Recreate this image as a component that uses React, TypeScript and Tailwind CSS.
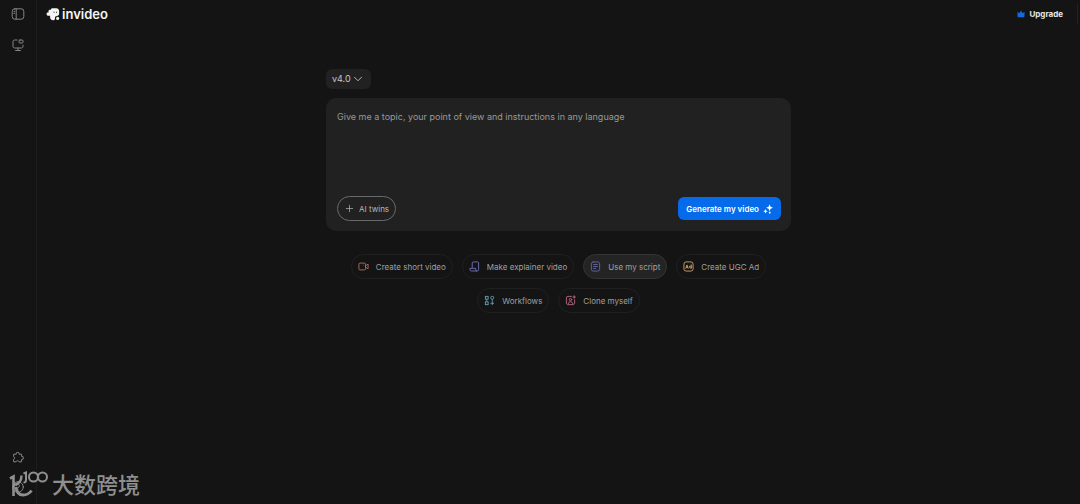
import React, { useState } from 'react';
import { Plus, ChevronDown } from 'lucide-react';

type IconProps = { className?: string };

const PanelIcon = ({ className }: IconProps) => (
  <svg viewBox="0 0 14 14" fill="none" stroke="currentColor" strokeLinecap="round" className={className}>
    <rect x="1.2" y="1.8" width="11.6" height="10.4" rx="2.6" />
    <path d="M5.2 1.8v10.4M3 4.6h.6M3 6.4h.6" />
  </svg>
);

const ScreenIcon = ({ className }: IconProps) => (
  <svg viewBox="0 0 14 14" fill="none" stroke="currentColor" strokeLinecap="round" strokeLinejoin="round" className={className}>
    <path d="M6.2 2H3.6A1.6 1.6 0 0 0 2 3.6v4.8A1.6 1.6 0 0 0 3.6 10h6.8A1.6 1.6 0 0 0 12 8.4V7.2" />
    <rect x="8" y="2" width="4" height="3" rx="1" />
    <path d="M7 10v2.4M4.6 12.5h4.8" />
  </svg>
);

const PuzzleIcon = ({ className }: IconProps) => (
  <svg viewBox="0 0 14 14" fill="none" stroke="currentColor" strokeLinejoin="round" className={className}>
    <path d="M2.6 4.2h2.6a1.5 1.5 0 1 1 2.9 0h2.5v2.3a1.5 1.5 0 1 1 0 2.9v2.4H8a1.5 1.5 0 0 0-2.9 0H2.6V9.3a1.5 1.5 0 0 0 0-2.8z" />
  </svg>
);

const HelpIcon = ({ className }: IconProps) => (
  <svg viewBox="0 0 14 14" fill="none" stroke="currentColor" strokeLinecap="round" className={className}>
    <circle cx="7" cy="7" r="5.3" />
    <path d="M5.7 5.7a1.4 1.4 0 1 1 1.9 1.3c-.4.2-.6.4-.6.9M7 9.9v.1" />
  </svg>
);

const LogoMark = ({ className }: IconProps) => (
  <svg viewBox="0 0 24 24" fill="currentColor" className={className}>
    <path d="M11 2h6.5c3 0 5 2 5 5v4.5c0 1.8-1 3-2.6 3.6l-4.4 1.6v2.8c0 2-1.5 3-3.5 3-3.2 0-5-2-5-5v-2.3H4.8C2.6 15.2 1 13.8 1 11.8c0-1.5 1-2.4 2.5-2.4h.8V7.3c0-1.5 1-2.5 2.5-2.5h1.5C8.6 3 9.4 2 11 2z" />
    <path d="M13 8h1.6v2H13zM17.4 8H19v2h-1.6z" className="fill-[#141414]" />
    <circle cx="20" cy="19.5" r="2.6" />
  </svg>
);

const CrownIcon = ({ className }: IconProps) => (
  <svg viewBox="0 0 16 16" fill="currentColor" className={className}>
    <path d="M1 3.5 4.8 6.5 8 1.2l3.2 5.3L15 3.5v9a2 2 0 0 1-2 2H3a2 2 0 0 1-2-2z" />
  </svg>
);

const SparkleIcon = ({ className }: IconProps) => (
  <svg viewBox="0 0 16 16" fill="currentColor" className={className}>
    <path d="M10.5.5l1.6 3.9L16 6l-3.9 1.6-1.6 3.9-1.6-3.9L5 6l3.9-1.6zM4 8l1.1 2.4L7.5 11.500l-2.400 1.100L4 15l-1.100-2.400L.5 11.500l2.400-1.100zM9.500 12.500h2.500V15H9.500z" />
  </svg>
);

const CameraIcon = ({ className }: IconProps) => (
  <svg viewBox="0 0 12 12" fill="none" stroke="currentColor" strokeLinejoin="round" className={className}>
    <rect x="1" y="2.3" width="7.2" height="7.4" rx="1.2" />
    <path d="M8.2 5.2 11 3.5v5L8.2 6.8M5.6 4.5h.6" />
  </svg>
);

const ExplainerIcon = ({ className }: IconProps) => (
  <svg viewBox="0 0 12 12" fill="none" stroke="currentColor" strokeLinejoin="round" className={className}>
    <path d="M3.5 7.5V2.2c0-.7.5-1.2 1.2-1.2h4.6c.7 0 1.2.5 1.2 1.2v7.3c0 .8-.6 1.4-1.4 1.4H2.6c-.9 0-1.6-.7-1.6-1.6V8h6.3v1.5c0 .8.7 1.4 1.5 1.4" />
  </svg>
);

const ScriptIcon = ({ className }: IconProps) => (
  <svg viewBox="0 0 12 12" fill="none" stroke="currentColor" strokeLinecap="round" className={className}>
    <rect x="1.5" y="1" width="9" height="10" rx="2" />
    <path d="M4 3.8h4M4 6h4M4 8.2h2" />
  </svg>
);

const AdIcon = ({ className }: IconProps) => (
  <svg viewBox="0 0 12 12" fill="none" stroke="currentColor" strokeLinejoin="round" className={className}>
    <rect x="1" y="1" width="10" height="10" rx="2.4" />
    <path d="M2.9 8.3 4.3 4.3 5.7 8.3M3.4 7.1h1.8M9 3.8v4.5M9 6.9a1.1 1.1 0 1 0-2.1 0 1.1 1.1 0 0 0 2.1 0" />
  </svg>
);

const WorkflowIcon = ({ className }: IconProps) => (
  <svg viewBox="0 0 12 12" fill="none" stroke="currentColor" className={className}>
    <rect x="1.5" y="1.5" width="3" height="3" />
    <rect x="7.5" y="1.5" width="3" height="3" rx="1" />
    <rect x="1.5" y="7.5" width="3" height="3" />
    <path d="M3 4.5v3M9 4.5V11M7 9h4" />
  </svg>
);

const CloneIcon = ({ className }: IconProps) => (
  <svg viewBox="0 0 12 12" fill="none" stroke="currentColor" strokeLinecap="round" className={className}>
    <path d="M7 1.5H3.2A1.7 1.7 0 0 0 1.5 3.2v5.6c0 .9.8 1.7 1.7 1.7h5.6c.9 0 1.7-.8 1.7-1.7V5.2" />
    <circle cx="6" cy="5" r="1.3" />
    <path d="M3.5 9.5c.4-1.5 1.2-2.2 2.5-2.2s2.1.7 2.5 2.2M10 .8v2.8M8.6 2.2h2.8" />
  </svg>
);

const chipRows = [
  [
    { label: 'Create short video', Icon: CameraIcon, color: 'text-[#b06f5c]' },
    { label: 'Make explainer video', Icon: ExplainerIcon, color: 'text-[#7272b4]' },
    { label: 'Use my script', Icon: ScriptIcon, color: 'text-[#6467a8]', active: true },
    { label: 'Create UGC Ad', Icon: AdIcon, color: 'text-[#cda06a]' },
  ],
  [
    { label: 'Workflows', Icon: WorkflowIcon, color: 'text-[#629db0]' },
    { label: 'Clone myself', Icon: CloneIcon, color: 'text-[#bd6680]' },
  ],
];

const Sidebar: React.FC = () => (
  <aside className="flex w-[37px] shrink-0 flex-col items-center border-r border-[#1d1d1d] pt-[7px] pb-2.5 text-[#858585]">
    <button aria-label="Toggle sidebar">
      <PanelIcon className="size-3.5" />
    </button>
    <button aria-label="Projects" className="mt-[17px]">
      <ScreenIcon className="size-3.5" />
    </button>
    <button aria-label="Plugins" className="mt-auto">
      <PuzzleIcon className="size-3.5" />
    </button>
    <button aria-label="Help" className="mt-4">
      <HelpIcon className="size-3.5" />
    </button>
  </aside>
);

const Header: React.FC = () => (
  <header className="flex h-7 items-center justify-between pr-0.5 pl-[9px]">
    <a href="#" className="flex items-center gap-0.5 text-[13px] leading-4 font-semibold text-[#f5f5f5]">
      <LogoMark className="size-3.5" />
      invideo
    </a>
    <div className="flex items-center gap-3.5">
      <button className="flex items-center gap-1 text-[8px] leading-3 font-bold text-[#e8e8e8]">
        <CrownIcon className="size-2 text-[#1469e0]" />
        Upgrade
      </button>
      <span className="h-5 w-px bg-[#222222]" />
    </div>
  </header>
);

const PromptBox: React.FC = () => {
  const [prompt, setPrompt] = useState('');

  return (
    <form onSubmit={(e) => e.preventDefault()} className="flex flex-col rounded-[10px] bg-[#212121] pt-3 pr-2.5 pb-2.5 pl-[11px]">
      <textarea
        aria-label="Video prompt"
        value={prompt}
        onChange={(e) => setPrompt(e.target.value)}
        className="h-[86px] w-full resize-none bg-transparent text-[9px] leading-[14px] text-[#dddddd] outline-none placeholder:text-[#999999]"
        placeholder="Give me a topic, your point of view and instructions in any language"
      />
      <div className="flex items-center justify-between">
        <button type="button" className="flex h-[25px] items-center gap-1 rounded-full border border-[#6a6a6a] px-1.5 text-[8px] text-[#b8b8b8]">
          <Plus size={11} strokeWidth={1.5} />
          AI twins
        </button>
        <button type="submit" className="flex h-[23px] items-center gap-1 rounded-md bg-[#056bea] px-2 text-[8px] font-semibold text-white">
          Generate my video
          <SparkleIcon className="size-2.5" />
        </button>
      </div>
    </form>
  );
};

const Watermark: React.FC = () => (
  <div className="pointer-events-none absolute bottom-1 left-2 flex items-center gap-1 text-[#8f8f8f]">
    <svg viewBox="0 0 40 30" fill="none" stroke="currentColor" strokeWidth="2" className="h-[30px] w-10">
      <path d="M2 8.5 5.5 6.5V26" strokeWidth="2.6" />
      <path d="M13.5 5.5c0 5-2.5 8.500-7.500 9.500" strokeWidth="2.4" />
      <path d="M8 17c.5 5 3 8 7 8 3.5 0 6.5-1.5 8.5-4.5" strokeWidth="2.8" />
      <path d="M15.5 3.5 18 2.5V10c0 1.5-1 2.5-2.5 2.500" />
      <circle cx="25.5" cy="7" r="4.5" />
      <circle cx="34.5" cy="7" r="4.5" />
    </svg>
    <span className="text-[22px] leading-[30px] font-medium">大数跨境</span>
  </div>
);

export default function App() {
  return (
    <div className="relative flex min-h-screen bg-[#141414] font-[Inter,'Noto_Sans_CJK_SC',sans-serif]">
      <Sidebar />
      <div className="flex flex-1 flex-col">
        <Header />
        <main className="mx-auto w-full max-w-[465px] pt-[41px]">
          <button className="mb-[9px] flex h-5 items-center rounded-md bg-[#212121] px-1.5 text-[9px] text-[#c8c8c8]">
            v4.0
            <ChevronDown size={14} strokeWidth={1.5} />
          </button>
          <PromptBox />
          <div className="mt-[23px] flex flex-col gap-[9px]">
            {chipRows.map((row, i) => (
              <div key={i} className="flex justify-center gap-[9px]">
                {row.map(({ label, Icon, color, active }) => (
                  <button
                    key={label}
                    className={`flex h-[25px] items-center gap-[7px] rounded-full border px-1.5 text-[8px] text-[#a0a0a0] ${
                      active ? 'border-[#343434] bg-[#242424]' : 'border-[#202020]'
                    }`}
                  >
                    <Icon className={`size-[11px] ${color}`} />
                    {label}
                  </button>
                ))}
              </div>
            ))}
          </div>
        </main>
      </div>
      <Watermark />
    </div>
  );
}
